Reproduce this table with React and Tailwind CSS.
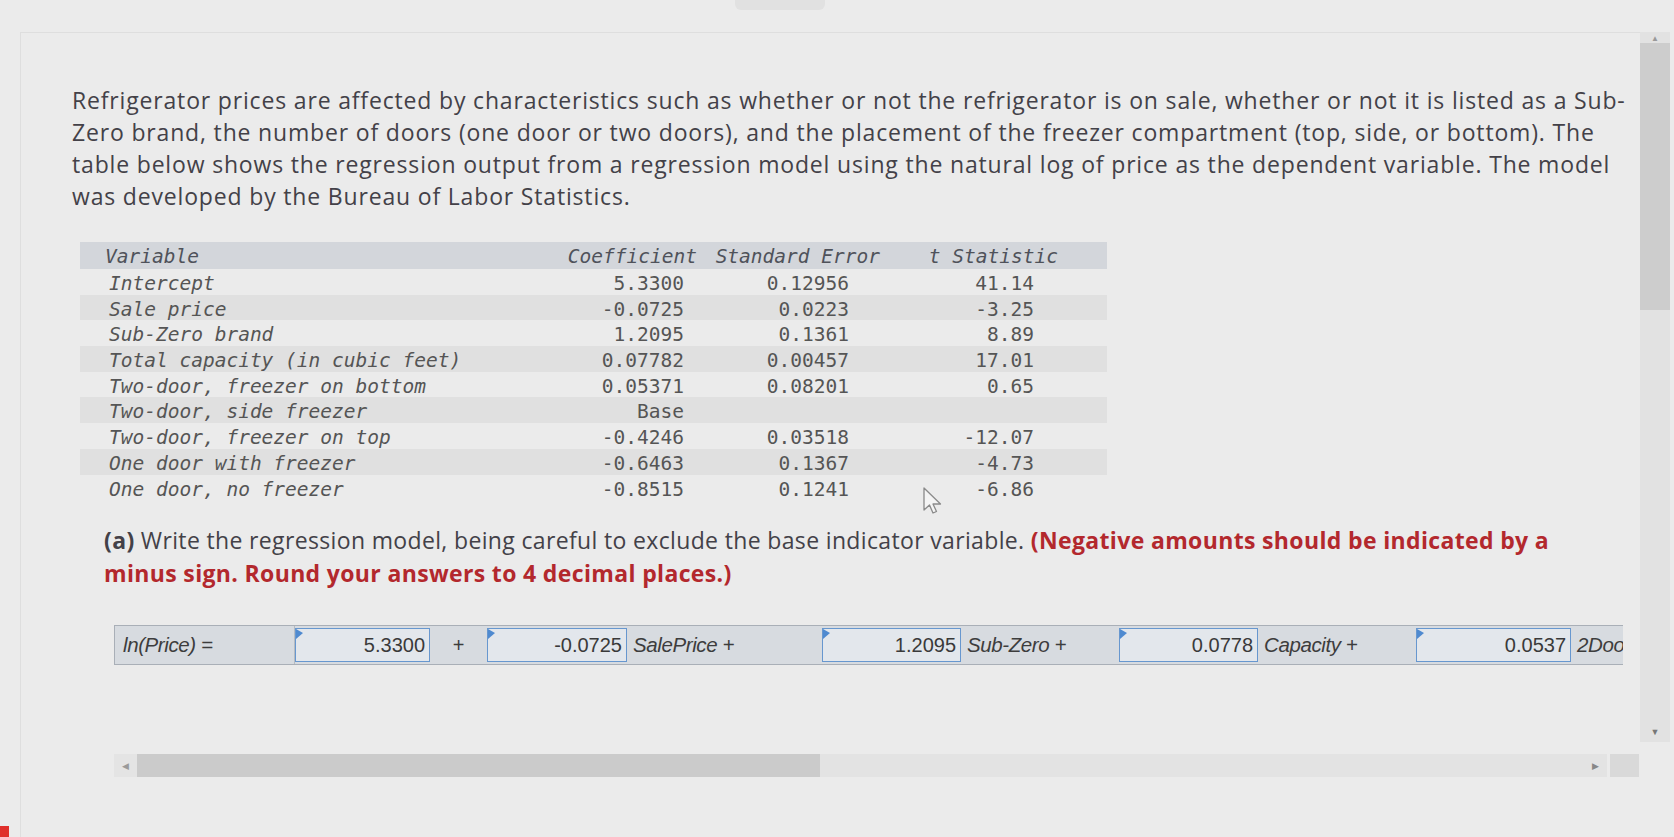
import React from 'react';

const rows = [
  { name: 'Intercept', coef: '5.3300', se: '0.12956', t: '41.14' },
  { name: 'Sale price', coef: '-0.0725', se: '0.0223', t: '-3.25', shade: true },
  { name: 'Sub-Zero brand', coef: '1.2095', se: '0.1361', t: '8.89' },
  { name: 'Total capacity (in cubic feet)', coef: '0.07782', se: '0.00457', t: '17.01', shade: true },
  { name: 'Two-door, freezer on bottom', coef: '0.05371', se: '0.08201', t: '0.65' },
  { name: 'Two-door, side freezer', coef: 'Base', se: '', t: '', shade: true },
  { name: 'Two-door, freezer on top', coef: '-0.4246', se: '0.03518', t: '-12.07' },
  { name: 'One door with freezer', coef: '-0.6463', se: '0.1367', t: '-4.73', shade: true },
  { name: 'One door, no freezer', coef: '-0.8515', se: '0.1241', t: '-6.86' },
];

const mono = "font-['DejaVu_Sans_Mono','Liberation_Mono',monospace]";

const Marker = () => (
  <svg className="absolute left-0 top-0" width="7" height="10" viewBox="0 0 7 10">
    <polygon points="0,0 7,4 0,10" fill="#4f8ad0" />
  </svg>
);

const Field = ({ value, width }) => (
  <div className={`relative h-[34px] ${width} shrink-0 border-[1.5px] border-[#6797cf] bg-[#e3e7ec] flex items-center justify-end pr-[4px] text-[20px] text-[#3a3a3a]`}>
    <Marker />
    {value}
  </div>
);

const Label = ({ children, width }) => (
  <div className={`${width} shrink-0 h-full flex items-center pl-[6px] italic text-[20.5px] tracking-[-0.4px] text-[#3d3d3d] whitespace-nowrap`}>
    {children}
  </div>
);

export default function App() {
  return (
    <div className="relative w-[1674px] h-[837px] overflow-hidden bg-[#ebebeb] font-['Open_Sans','Lato',sans-serif]">
      <div className="absolute left-[735px] top-0 w-[90px] h-[10px] rounded-b-md bg-[#e1e1e1]" />
      <div className="absolute left-0 bottom-0 w-[9px] h-[11px] bg-[#e0302c]" />

      <div className="flex h-full">
        <main className="flex-1 mt-[32px] ml-[20px] border-t border-l border-[#dedede] pl-[51px] pt-[51px]">
          <p className="text-[23px] leading-[32px] text-[#434148] tracking-[0.83px] whitespace-nowrap">
            Refrigerator prices are affected by characteristics such as whether or not the refrigerator is on sale, whether or not it is listed as a Sub-
            <br />
            Zero brand, the number of doors (one door or two doors), and the placement of the freezer compartment (top, side, or bottom). The
            <br />
            table below shows the regression output from a regression model using the natural log of price as the dependent variable. The model
            <br />
            was developed by the Bureau of Labor Statistics.
          </p>

          <div className={`mt-[30px] ml-[8px] w-[1027px] ${mono} text-[19.5px] text-[#555]`}>
            <div className="grid grid-cols-[480px_145px_185px_217px] h-[27px] items-center bg-[#d3d6db] italic text-[#4f525a]">
              <div className="pl-[25px]">Variable</div>
              <div className="text-right pr-[8px]">Coefficient</div>
              <div className="text-right pr-[10px]">Standard Error</div>
              <div className="text-right pr-[49px]">t Statistic</div>
            </div>
            {rows.map((r) => (
              <div
                key={r.name}
                className={`grid grid-cols-[480px_145px_185px_217px] h-[25.7px] items-center ${r.shade ? 'bg-[#e0e0e0]' : ''}`}
              >
                <div className="pl-[29px] italic whitespace-pre">{r.name}</div>
                <div className="text-right pr-[21px]">{r.coef}</div>
                <div className="text-right pr-[41px]">{r.se}</div>
                <div className="text-right pr-[73px]">{r.t}</div>
              </div>
            ))}
          </div>

          <p className="mt-[24px] ml-[32px] text-[23px] leading-[33px] text-[#434148] tracking-[0.35px] whitespace-nowrap">
            <span className="font-bold">(a)</span> Write the regression model, being careful to exclude the base indicator variable.{' '}
            <span className="font-bold text-[#b3282d]">(Negative amounts should be indicated by a</span>
            <br />
            <span className="font-bold text-[#b3282d]">minus sign. Round your answers to 4 decimal places.)</span>
          </p>

          <div className="mt-[35px] ml-[42px] w-[1509px] overflow-hidden font-['Liberation_Sans',Arial,sans-serif]">
            <div className="flex items-center h-[40px] w-[1600px] bg-[#d7dbe0] border border-[#a9afb7]">
              <div className="w-[180px] shrink-0 h-full flex items-center pl-[8px] italic text-[20.5px] tracking-[-0.4px] text-[#3d3d3d] border-r border-[#b5bbc2]">
                ln(Price) =
              </div>
              <Field value="5.3300" width="w-[135px]" />
              <div className="w-[57px] shrink-0 text-center text-[20px] text-[#3d3d3d]">+</div>
              <Field value="-0.0725" width="w-[140px]" />
              <Label width="w-[195px]">SalePrice +</Label>
              <Field value="1.2095" width="w-[139px]" />
              <Label width="w-[158px]">Sub-Zero +</Label>
              <Field value="0.0778" width="w-[139px]" />
              <Label width="w-[158px]">Capacity +</Label>
              <Field value="0.0537" width="w-[155px]" />
              <Label width="w-[120px]">2Door-Bottom +</Label>
            </div>
          </div>

          <div className="mt-[89px] ml-[42px] w-[1525px] h-[23px] flex">
            <div className="w-[23px] h-full bg-[#e4e4e4] flex items-center justify-center text-[9px] text-[#9a9a9a]">◀</div>
            <div className="w-[683px] h-full bg-[#cbcbcb]" />
            <div className="flex-1 h-full bg-[#e3e3e3] flex items-center justify-end pr-[8px] text-[9px] text-[#888]">▶</div>
            <div className="w-[29px] h-full ml-[3px] bg-[#d9d9d9]" />
          </div>
        </main>

        <aside className="w-[30px] mt-[32px] mr-[4px] h-[710px] bg-[#e2e2e2] flex flex-col">
          <div className="h-[11px] flex items-center justify-center text-[8px] text-[#999]">▲</div>
          <div className="h-[267px] bg-[#cdcdcd]" />
          <div className="flex-1" />
          <div className="h-[20px] flex items-center justify-center text-[9px] text-[#777]">▼</div>
        </aside>
      </div>

      <svg className="absolute left-[922px] top-[486px]" width="24" height="32" viewBox="0 0 24 32">
        <path d="M2 2 L2 24 L7.5 19 L11 27 L14.5 25.5 L11 18 L18.5 18 Z" fill="#f4f4f4" stroke="#8a8a8a" strokeWidth="1.3" strokeLinejoin="round" />
      </svg>
    </div>
  );
}
